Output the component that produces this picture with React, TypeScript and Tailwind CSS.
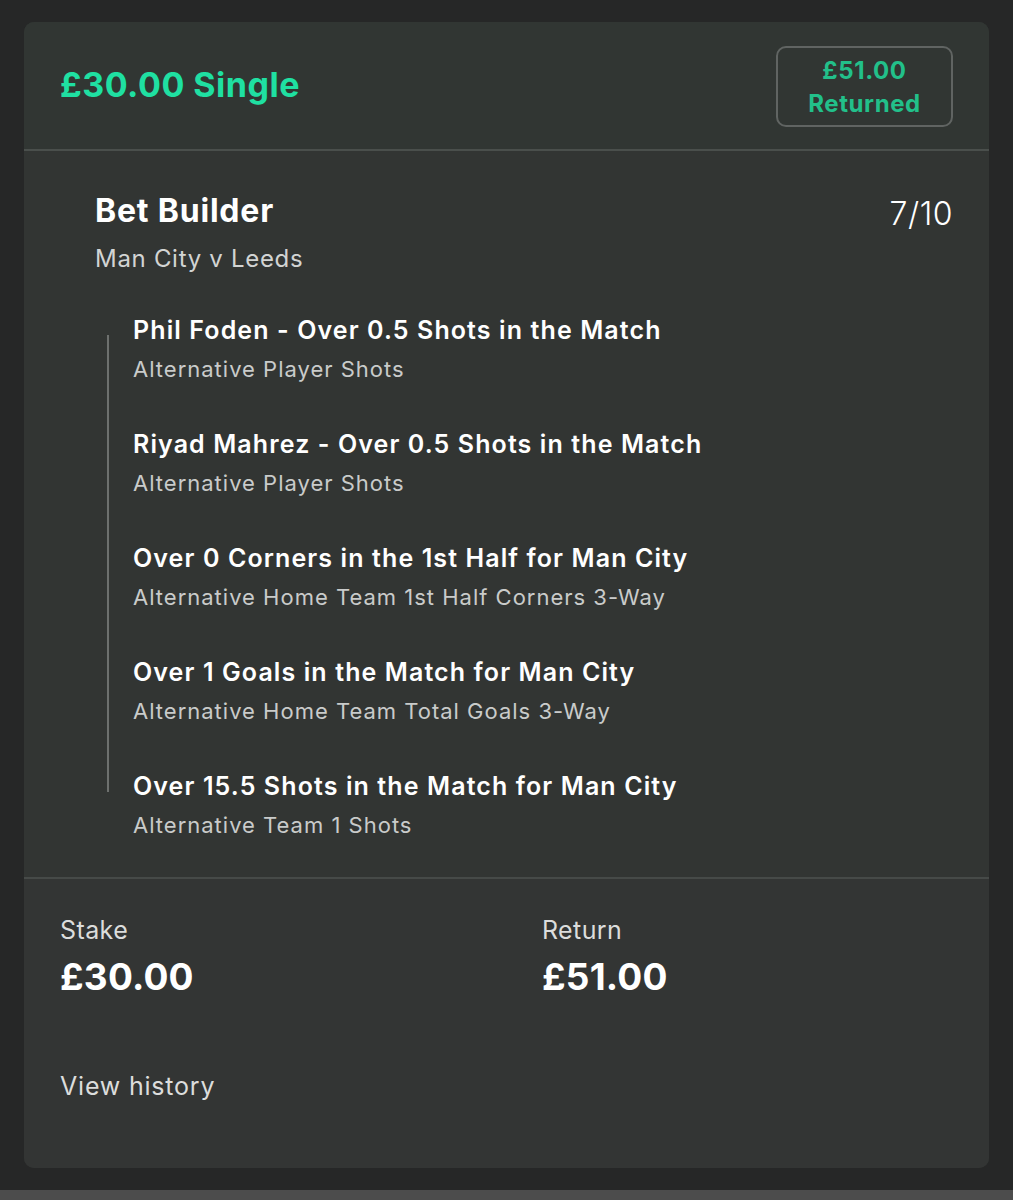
const selections = [
  { title: 'Phil Foden - Over 0.5 Shots in the Match', market: 'Alternative Player Shots' },
  { title: 'Riyad Mahrez - Over 0.5 Shots in the Match', market: 'Alternative Player Shots' },
  { title: 'Over 0 Corners in the 1st Half for Man City', market: 'Alternative Home Team 1st Half Corners 3-Way' },
  { title: 'Over 1 Goals in the Match for Man City', market: 'Alternative Home Team Total Goals 3-Way' },
  { title: 'Over 15.5 Shots in the Match for Man City', market: 'Alternative Team 1 Shots' },
]

export default function App() {
  return (
    <main
      className="flex h-[1200px] flex-col bg-[#262727]"
      style={{ fontFamily: 'Inter, "Noto Sans", "Liberation Sans", sans-serif' }}
    >
      <div className="flex-1 pl-[24px] pr-[24px] pt-[22px]">
        <section className="overflow-hidden rounded-[10px] bg-[#323533]">
          {/* header */}
          <div className="flex items-start justify-between border-b-2 border-[#4a4f4c] bg-[#313633] pb-[22px] pl-[36px] pr-[36px] pt-[24px]">
            <h1 className="mt-[19px] text-[34px] font-bold leading-[40px] tracking-[0.5px] text-[#1fe0a2]">
              £30.00 Single
            </h1>
            <div className="flex h-[81px] w-[177px] flex-col items-center justify-center rounded-[10px] border-2 border-[#606462] text-[24px] font-bold leading-[33px] tracking-[0.6px] text-[#22c08a]">
              <span>£51.00</span>
              <span>Returned</span>
            </div>
          </div>

          {/* bet builder */}
          <div className="border-b-2 border-[#464a48] pb-[37px] pl-[71px] pr-[36px] pt-[42px]">
            <div className="flex items-start justify-between">
              <h2 className="text-[32px] font-bold leading-[36px] tracking-[0.8px] text-white">Bet Builder</h2>
              <span className="mt-[3px] text-[32px] font-light leading-[36px] tracking-[0.5px] text-white">7/10</span>
            </div>
            <p className="mt-[12px] text-[24px] leading-[30px] tracking-[0.7px] text-[#d2d4d3]">
              Man City v Leeds
            </p>

            <div className="mt-[41px] flex">
              <div className="ml-[12px] mb-[48px] mt-[20px] w-[2px] shrink-0 bg-[#6d706e]" />
              <ul className="ml-[24px] flex flex-col gap-[45px]">
                {selections.map((s) => (
                  <li key={s.title}>
                    <p className="text-[25px] font-semibold leading-[30px] tracking-[1.1px] text-white">
                      {s.title}
                    </p>
                    <p className="mt-[9px] text-[22px] leading-[30px] tracking-[1px] text-[#c9cbca]">
                      {s.market}
                    </p>
                  </li>
                ))}
              </ul>
            </div>
          </div>

          {/* footer */}
          <div className="bg-[#333534] pb-[66px] pl-[36px] pr-[36px] pt-[35px]">
            <div className="grid grid-cols-[482px_1fr]">
              <div>
                <p className="text-[25px] leading-[32px] tracking-[0.4px] text-[#dcdddc]">Stake</p>
                <p className="mt-[9px] text-[37px] font-bold leading-[44px] tracking-[0.2px] text-white">£30.00</p>
              </div>
              <div>
                <p className="text-[25px] leading-[32px] tracking-[0.4px] text-[#dcdddc]">Return</p>
                <p className="mt-[9px] text-[37px] font-bold leading-[44px] tracking-[0.2px] text-white">£51.00</p>
              </div>
            </div>
            <p className="mt-[71px] text-[25px] leading-[32px] tracking-[0.8px] text-[#dcdddc]">
              View history
            </p>
          </div>
        </section>
      </div>
      <div className="h-[10px] bg-[#4c4c4c]" />
    </main>
  )
}
